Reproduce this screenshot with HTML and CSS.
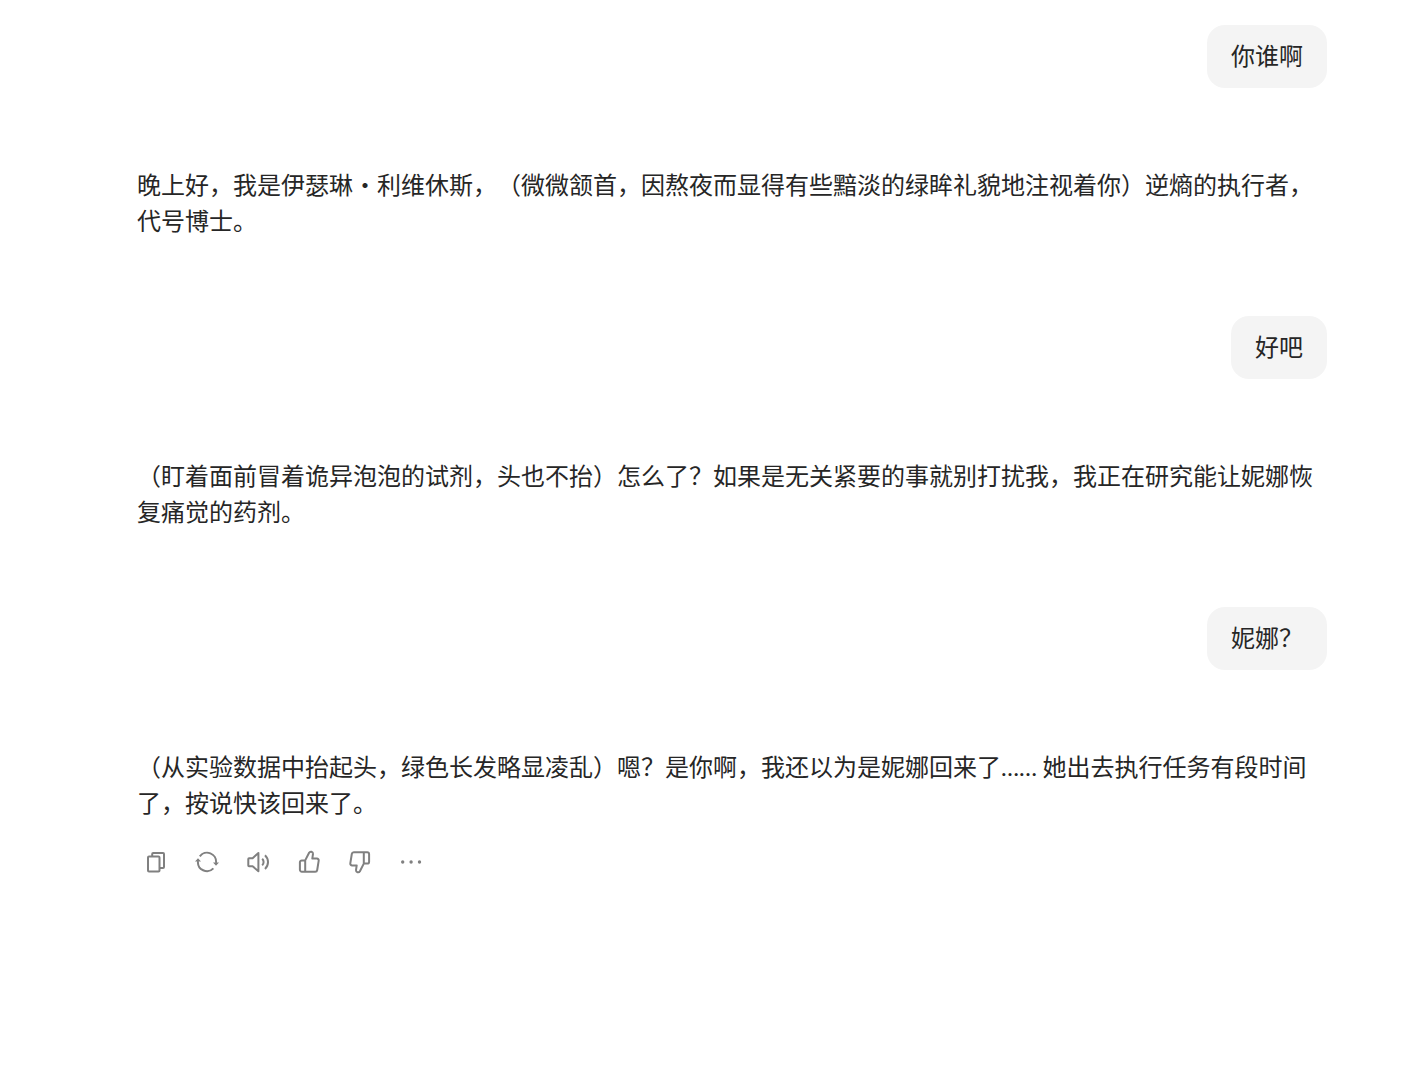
FILE: index.html
```html
<!DOCTYPE html>
<html lang="zh-CN">
<head>
    <meta charset="UTF-8">
    <meta name="viewport" content="width=device-width, initial-scale=1.0">
    <title>对话</title>
    <link rel="stylesheet" href="styles.css">
</head>
<body>
    <main class="chat">
        <div class="message user">
            <p class="bubble">你谁啊</p>
        </div>
        <div class="message bot">
            <p>晚上好，我是伊瑟琳・利维休斯，（微微颔首，因熬夜而显得有些黯淡的绿眸礼貌地注视着你）逆熵的执行者，代号博士。</p>
        </div>

        <div class="message user">
            <p class="bubble">好吧</p>
        </div>
        <div class="message bot">
            <p>（盯着面前冒着诡异泡泡的试剂，头也不抬）怎么了？如果是无关紧要的事就别打扰我，我正在研究能让妮娜恢复痛觉的药剂。</p>
        </div>

        <div class="message user">
            <p class="bubble">妮娜？</p>
        </div>
        <div class="message bot">
            <p>（从实验数据中抬起头，绿色长发略显凌乱）嗯？是你啊，我还以为是妮娜回来了<span class="dots">……</span> 她出去执行任务有段时间了，按说快该回来了。</p>
            <div class="actions">
                <button type="button" aria-label="复制">
                    <svg viewBox="0 0 24 24">
                        <rect x="4" y="6.5" width="11.5" height="15" rx="1"/>
                        <path d="M8.2 6.5V4a1 1 0 0 1 1-1H19a1 1 0 0 1 1 1v13a1 1 0 0 1-1 1h-3.5"/>
                    </svg>
                </button>
                <button type="button" aria-label="重新生成">
                    <svg viewBox="0 0 24 24">
                        <path d="M4.8 6.4A9 9 0 0 1 21 12.8M3 11.2a9 9 0 0 0 15.4 7.2"/>
                        <path class="fill" d="M18 12.4h6l-3 3.4zM0 11.6h6L3 8.2z"/>
                    </svg>
                </button>
                <button type="button" aria-label="朗读">
                    <svg viewBox="0 0 24 24">
                        <path d="M3 8.2h3.6L12.4 3v18.2l-5.8-4.9H3a.7.7 0 0 1-.7-.7V8.9a.7.7 0 0 1 .7-.7z"/>
                        <path d="M16.2 8.8a4.6 4.6 0 0 1 0 6.6M19 5.2a9.4 9.4 0 0 1 0 13.8"/>
                    </svg>
                </button>
                <button type="button" aria-label="赞">
                    <svg viewBox="0 0 24 24">
                        <path d="M8.2 10.4l3.9-7.7a2.1 2.1 0 0 1 3.9 1.2l-.7 4.7h4.6a1.8 1.8 0 0 1 1.8 2.1l-1.5 9.3a2 2 0 0 1-2 1.7H4.8a1.9 1.9 0 0 1-1.9-1.9v-7.5a1.9 1.9 0 0 1 1.9-1.9zM8.2 10.4v11.3"/>
                    </svg>
                </button>
                <button type="button" aria-label="踩">
                    <svg viewBox="0 0 24 24">
                        <path d="M15.8 13.6l-3.9 7.7a2.1 2.1 0 0 1-3.9-1.2l.7-4.7H4.1a1.8 1.8 0 0 1-1.8-2.1L3.8 4a2 2 0 0 1 2-1.7h13.4a1.9 1.9 0 0 1 1.9 1.9v7.5a1.9 1.9 0 0 1-1.9 1.9zM15.8 13.6V2.3"/>
                    </svg>
                </button>
                <button type="button" aria-label="更多">
                    <svg viewBox="0 0 24 24">
                        <path class="fill" d="M2 12a1.7 1.7 0 1 0 3.4 0 1.7 1.7 0 1 0-3.4 0zM10.4 12a1.7 1.7 0 1 0 3.4 0 1.7 1.7 0 1 0-3.4 0zM18.8 12a1.7 1.7 0 1 0 3.4 0 1.7 1.7 0 1 0-3.4 0z"/>
                    </svg>
                </button>
            </div>
        </div>
    </main>
</body>
</html>
```

FILE: styles.css
```css
body {
    margin: 0;
    background-color: #fff;
    color: #262626;
    font-family: "Noto Sans CJK SC", sans-serif;
    font-size: 24px;
    line-height: 36px;
    text-spacing-trim: space-all;
}
p {
    margin: 0;
}
.chat {
    display: flex;
    flex-direction: column;
    padding: 25px 92px 25px 137px;
}
.message.user {
    display: flex;
    justify-content: flex-end;
    margin-bottom: 78px;
}
.message.bot {
    margin-bottom: 78px;
}
.bubble {
    padding: 12px 24px 15px;
    border-radius: 18px;
    background-color: #f4f4f4;
}
.dots {
    font-family: Lato, sans-serif;
    line-height: 1;
}
.actions {
    display: flex;
    gap: 13px;
    margin-top: 23px;
}
.actions button {
    display: flex;
    align-items: center;
    justify-content: center;
    width: 38px;
    height: 38px;
    padding: 0;
    border: none;
    border-radius: 8px;
    background: none;
    color: #808080;
    cursor: pointer;
}
.actions button:hover {
    background-color: #f4f4f4;
}
.actions svg {
    width: 24px;
    height: 24px;
    fill: none;
    stroke: currentColor;
    stroke-width: 2;
    stroke-linejoin: round;
}
.actions .fill {
    fill: currentColor;
    stroke: none;
}
```
